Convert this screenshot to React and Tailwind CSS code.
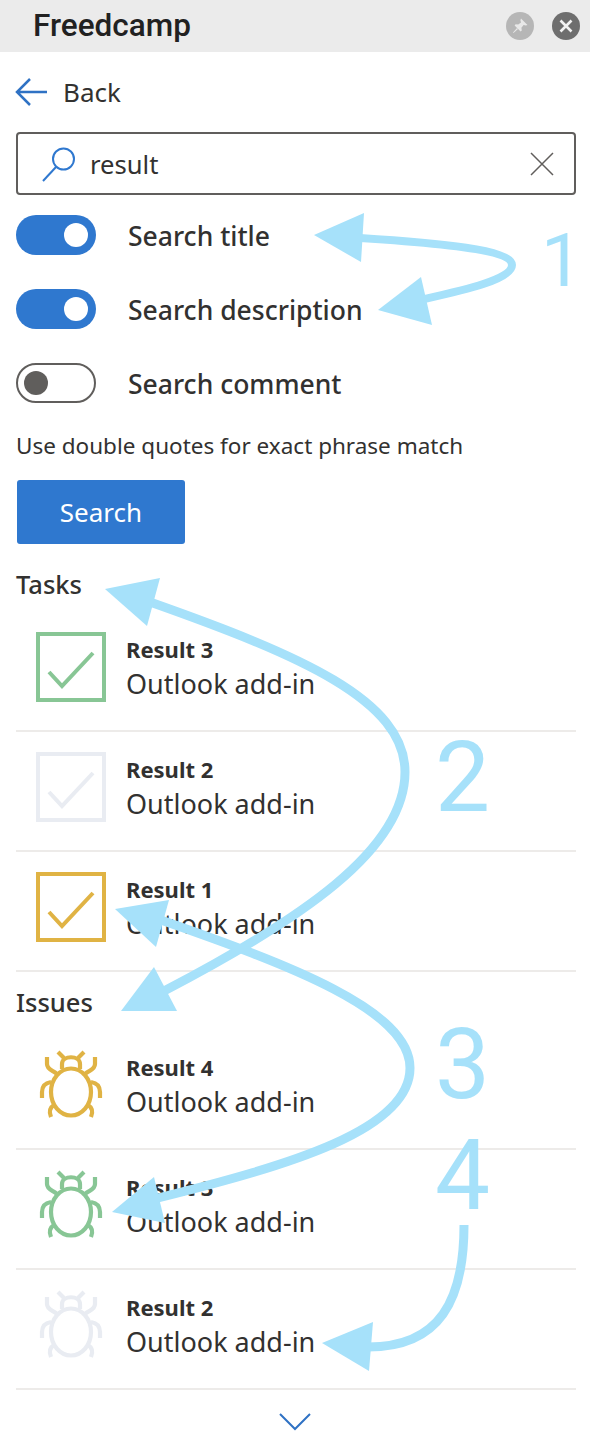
const font = "font-['Noto_Sans',sans-serif]";

const Toggle = ({ on }) => (
  <div
    className={`w-20 h-10 rounded-full flex items-center ${
      on ? "bg-[#2f78cf] justify-end px-2" : "border-2 border-[#605e5c] justify-start px-1.5"
    }`}
  >
    <div className={`w-6 h-6 rounded-full ${on ? "bg-white" : "bg-[#605e5c]"}`}></div>
  </div>
);

const ToggleRow = ({ on, label }) => (
  <div className="h-10 flex items-center gap-8">
    <Toggle on={on} />
    <span className="text-[26.5px] font-medium text-[#323130] leading-none pt-[3px]">{label}</span>
  </div>
);

const CheckIcon = ({ color }) => (
  <svg width="70" height="70" viewBox="0 0 70 70" fill="none" stroke={color} strokeWidth="4" className="shrink-0">
    <rect x="2" y="2" width="66" height="66" />
    <path d="M13 40 L26 54 L57 21" />
  </svg>
);

const BugIcon = ({ color }) => (
  <svg width="70" height="70" viewBox="0 0 70 70" fill="none" stroke={color} strokeWidth="4.2" className="shrink-0">
    <ellipse cx="35" cy="42" rx="20" ry="23.5" />
    <path d="M26 19 V14 C26 5 44 5 44 14 V19" />
    <path d="M22 2 L28 8 M48 2 L42 8" />
    <path d="M11 7 V14 C11 20 17 20 21 24 M59 7 V14 C59 20 53 20 49 24" />
    <path d="M15 32 C9 33 6 37 6 42 V48 M55 32 C61 33 64 37 64 42 V48" />
    <path d="M18 55 C13 58 13 62 15 67 M52 55 C57 58 57 62 55 67" />
  </svg>
);

const ResultRow = ({ title, icon }) => (
  <div className="h-[120px] border-b-2 border-[#edebe9] pt-5 pl-5 flex gap-5">
    {icon}
    <div className="pt-px">
      <p className="text-[22px] font-bold text-[#323130] leading-[32px]">{title}</p>
      <p className="mt-px text-[27px] text-[#323130] leading-[36px]">Outlook add-in</p>
    </div>
  </div>
);

// annotation arrows that sit on top of the page
const Arrows = () => (
  <svg width="590" height="1456" viewBox="0 0 590 1456" fill="none" className="absolute top-0 left-0 pointer-events-none">
    <g stroke="#a6e1fa" strokeWidth="8">
      <path d="M360 238 C440 243 512 250 512 265 C512 280 460 291 420 300" />
    </g>
    <g stroke="#a6e1fa" strokeWidth="9">
      <path d="M150 602 C300 655 405 700 405 772 C405 850 300 920 164 991" />
      <path d="M158 919 C290 965 410 1010 410 1068 C410 1130 290 1165 158 1198" />
      <path d="M464 1225 C464 1300 440 1347 368 1347" />
    </g>
    <g fill="#a6e1fa">
      <path d="M314 235 L364 213 L361 262 Z" />
      <path d="M378 310 L421 277 L432 325 Z" />
      <path d="M105 589 L160 578 L147 626 Z" />
      <path d="M121 1011 L154 967 L177 1011 Z" />
      <path d="M115 909 L169 900 L156 947 Z" />
      <path d="M112 1212 L154 1177 L165 1223 Z" />
      <path d="M322 1343 L373 1322 L369 1371 Z" />
    </g>
  </svg>
);

const Num = ({ children, className }) => (
  <span className={`absolute font-['Roboto',sans-serif] font-normal text-[#a6e1fa] leading-none ${className}`}>
    {children}
  </span>
);

const App = () => {
  return (
    <div className={`relative w-[590px] h-[1456px] bg-white overflow-hidden ${font}`}>
      <div className="h-[52px] bg-[#ebebeb] flex items-center pl-[33px] pr-[10px]">
        <span className="font-['Roboto',sans-serif] font-medium text-[31.5px] text-[#212121] flex-1">Freedcamp</span>
        <div className="flex gap-[18px]">
          <div className="w-7 h-7 rounded-full bg-[#b6b6b6] flex items-center justify-center">
            <svg width="18" height="18" viewBox="0 0 18 18" fill="#e8e8e8">
              <path d="M10 1.5 L16.5 8 L14.8 8.6 L12.6 8 L10.4 10.8 L10.8 13.4 L9.6 14.4 L3.6 8.4 L4.6 7.2 L7.2 7.6 L10 5.4 L9.4 3.2 Z" />
              <path d="M6 11 L7 12 L2.5 16 L2 15.5 Z" />
            </svg>
          </div>
          <div className="w-7 h-7 rounded-full bg-[#6e6e6e] flex items-center justify-center">
            <svg width="16" height="16" viewBox="0 0 16 16" stroke="#f2f2f2" strokeWidth="2.6">
              <path d="M2.5 2.5 L13.5 13.5 M13.5 2.5 L2.5 13.5" />
            </svg>
          </div>
        </div>
      </div>

      <div className="pl-4 pr-3.5">
        <div className="h-20 flex items-center gap-4 -ml-px">
          <svg width="32" height="28" viewBox="0 0 32 28" fill="none" stroke="#2f72c4" strokeWidth="2.5" className="shrink-0">
            <path d="M32 14 H2 M15 1 L2 14 L15 27" />
          </svg>
          <span className="text-[26px] text-[#323130]">Back</span>
        </div>

        <div className="h-[63px] border-2 border-[#605e5c] rounded-[4px] flex items-center pl-6 pr-[20px]">
          <svg width="34" height="36" viewBox="0 0 34 36" fill="none" stroke="#2f78cf" strokeWidth="2" className="shrink-0">
            <circle cx="21.5" cy="13" r="10.5" />
            <path d="M14 21 L1 35" />
          </svg>
          <span className="text-[25.6px] text-[#323130] flex-1 ml-3.5 pt-1">result</span>
          <svg width="24" height="24" viewBox="0 0 24 24" stroke="#605e5c" strokeWidth="1.5">
            <path d="M1 1 L23 23 M23 1 L1 23" />
          </svg>
        </div>

        <div className="mt-5 flex flex-col gap-[34px]">
          <ToggleRow on label="Search title" />
          <ToggleRow on label="Search description" />
          <ToggleRow label="Search comment" />
        </div>

        <p className="mt-[26px] text-[22.5px] text-[#323130] leading-[34px]">Use double quotes for exact phrase match</p>

        <button className="mt-[17px] ml-px w-[168px] h-16 bg-[#2f78cf] rounded-[3px] text-white text-[26px]">Search</button>

        <h2 className="mt-[23px] text-[25.5px] font-medium text-[#323130] leading-[34px]">Tasks</h2>
        <div className="mt-[11px]">
          <ResultRow title="Result 3" icon={<CheckIcon color="#88c695" />} />
          <ResultRow title="Result 2" icon={<CheckIcon color="#e9ecf2" />} />
          <ResultRow title="Result 1" icon={<CheckIcon color="#e0b344" />} />
        </div>

        <h2 className="mt-[13px] text-[25.5px] font-medium text-[#323130] leading-[34px]">Issues</h2>
        <div className="mt-[11px]">
          <ResultRow title="Result 4" icon={<BugIcon color="#e0b344" />} />
          <ResultRow title="Result 3" icon={<BugIcon color="#88c695" />} />
          <ResultRow title="Result 2" icon={<BugIcon color="#e9ecf2" />} />
        </div>

        <div className="flex justify-center pt-[23px] pr-[2px]">
          <svg width="32" height="18" viewBox="0 0 32 18" fill="none" stroke="#2f72c4" strokeWidth="2">
            <path d="M1 1 L16 16 L31 1" />
          </svg>
        </div>
      </div>

      <Arrows />
      <Num className="left-[541px] top-[224px] text-[74px]">1</Num>
      <Num className="left-[435px] top-[729px] text-[98px]">2</Num>
      <Num className="left-[435px] top-[1016px] text-[98px]">3</Num>
      <Num className="left-[435px] top-[1127px] text-[98px]">4</Num>
    </div>
  );
};

export default App;
